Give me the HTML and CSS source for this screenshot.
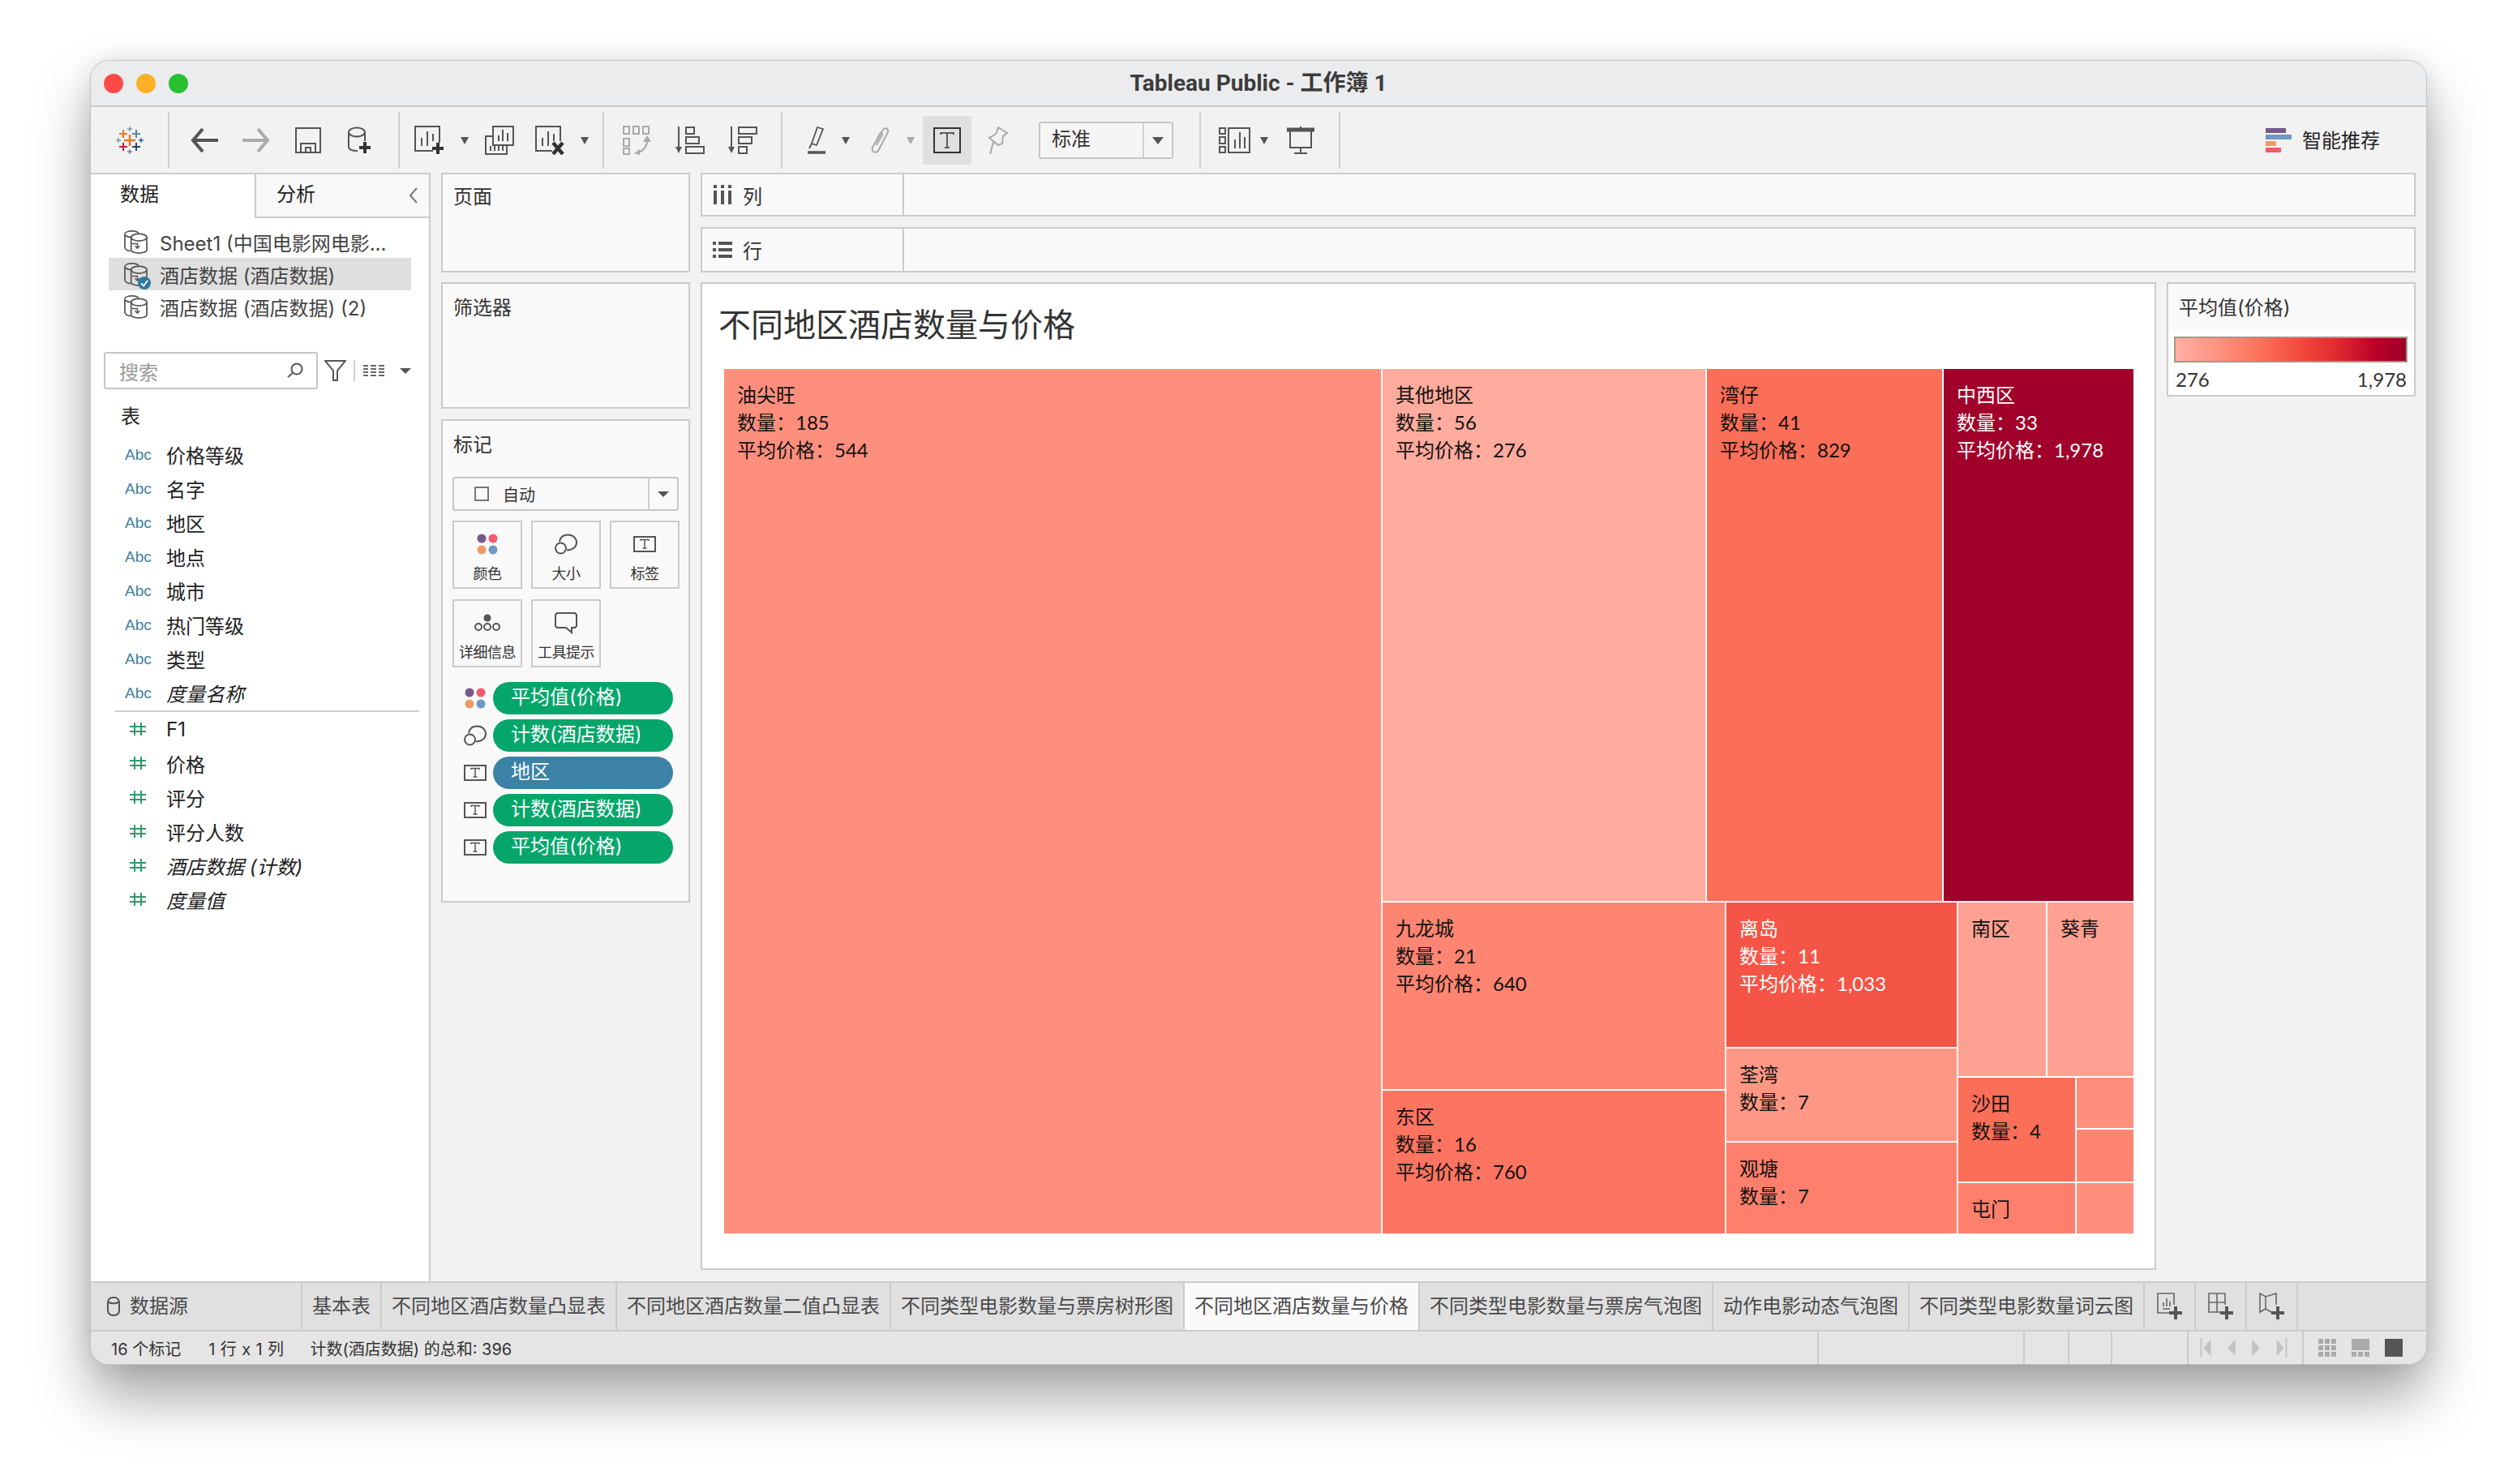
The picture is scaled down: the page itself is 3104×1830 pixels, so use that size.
FILE: index.html
```html
<!DOCTYPE html>
<html>
<head>
    <title>Tableau Public - 工作簿 1</title>
    <link rel="stylesheet" href="styles.css">
</head>
<body>
<svg class="defs" width="0" height="0">
    <symbol id="i-db" viewBox="0 0 32 30">
        <g fill="none" stroke="#555" stroke-width="1.8">
            <path d="M2 5V22C2 24 5 26 9 26.500"/>
            <path d="M2 5C2 2.500 6 1 11 1C15 1 19 2 20 5"/>
            <path d="M2 6C4 8 8 9 11 8.800"/>
            <ellipse cx="20" cy="9" rx="10" ry="4.500"/>
            <path d="M10 9V25C10 27.500 15 29 20 29S30 27.500 30 25V9"/>
            <path d="M11 17H18V22M15 20L18 23L21 20" stroke-width="1.500"/>
        </g>
    </symbol>
    <symbol id="i-dots" viewBox="0 0 26 26">
        <circle cx="6" cy="6" r="5.500" fill="#76588a"/>
        <circle cx="20" cy="6" r="5.500" fill="#f55a6e"/>
        <circle cx="6" cy="20" r="5.500" fill="#ee9a67"/>
        <circle cx="20" cy="20" r="5.500" fill="#7098c4"/>
    </symbol>
    <symbol id="i-size" viewBox="0 0 28 26">
        <path d="M6 10C7 4 11 1.500 16.500 1.500C23 1.500 27 6 27 11C27 16 23 20 15 20.500" fill="none" stroke="#555" stroke-width="2"/>
        <circle cx="7.500" cy="18" r="6.500" fill="none" stroke="#555" stroke-width="2"/>
    </symbol>
    <symbol id="i-t" viewBox="0 0 28 20">
        <rect x="1" y="1" width="26" height="18" fill="none" stroke="#555" stroke-width="2"/>
        <path d="M9 6V4.500H19V6M14 4.500V15M11.500 15H16.500" fill="none" stroke="#555" stroke-width="1.500"/>
    </symbol>
    <symbol id="i-hash" viewBox="0 0 20 16">
        <path d="M6 0V16M14 0V16M0 5H20M0 11H20" fill="none" stroke="#2d9a6b" stroke-width="2"/>
    </symbol>
</svg>

<div class="window">
    <div class="titlebar">
        <div class="lights">
            <span class="light red"></span>
            <span class="light yellow"></span>
            <span class="light green"></span>
        </div>
        <div class="title">Tableau Public - 工作簿 1</div>
    </div>

    <div class="toolbar">
        <div class="tb-group logo-group">
            <svg width="34" height="34" viewBox="0 0 34 34" fill="none" stroke-width="2">
                <path d="M17 10V24M10 17H24" stroke="#e8762b" stroke-width="2.500"/>
                <path d="M9 4V14M4 9H14" stroke="#e8762b"/>
                <path d="M25 4V14M20 9H30" stroke="#5b879b"/>
                <path d="M9 20V30M4 25H14" stroke="#c72035"/>
                <path d="M25 20V30M20 25H30" stroke="#1f447e"/>
                <path d="M17 0V6M14 3H20" stroke="#7199a6" stroke-width="1.500"/>
                <path d="M3 14V20M0 17H6" stroke="#6f9fb0" stroke-width="1.500"/>
                <path d="M31 14V20M28 17H34" stroke="#3d6a8c" stroke-width="1.500"/>
                <path d="M17 28V34M14 31H20" stroke="#7b7aa0" stroke-width="1.500"/>
            </svg>
        </div>
        <div class="tb-group pad-11">
            <div class="tb w64">
                <svg width="36" height="32" viewBox="0 0 36 32" fill="none" stroke="#555" stroke-width="4">
                    <path d="M35 16H5M16 2L4 16L16 30"/>
                </svg>
            </div>
            <div class="tb w64">
                <svg width="36" height="32" viewBox="0 0 36 32" fill="none" stroke="#aaa" stroke-width="4">
                    <path d="M1 16H31M20 2L32 16L20 30"/>
                </svg>
            </div>
            <div class="tb w64">
                <svg width="32" height="32" viewBox="0 0 32 32" fill="none" stroke="#555" stroke-width="2">
                    <path d="M1 1H31V31H1Z"/>
                    <path d="M7 31V20H25V31M13 31V25H19V31" />
                </svg>
            </div>
            <div class="tb w64">
                <svg width="30" height="34" viewBox="0 0 30 34" fill="none">
                    <ellipse cx="11" cy="7" rx="10" ry="5.500" stroke="#555" stroke-width="2"/>
                    <path d="M1 7V25C1 28 5 30 12 30M21 7V18" stroke="#555" stroke-width="2"/>
                    <path d="M21 19V33M14 26H28" stroke="#333" stroke-width="4"/>
                </svg>
            </div>
        </div>
        <div class="tb-group pad-6">
            <div class="tb w62">
                <svg width="38" height="36" viewBox="0 0 38 36" fill="none">
                    <path d="M23 31H1V1H31V21" stroke="#555" stroke-width="2"/>
                    <path d="M9 25V15M16 25V7M23 19V10" stroke="#555" stroke-width="2"/>
                    <path d="M29 21V35M22 28H36" stroke="#333" stroke-width="4"/>
                </svg>
            </div>
            <div class="tb w24"><span class="caret"></span></div>
            <div class="tb w62">
                <svg width="36" height="36" viewBox="0 0 36 36" fill="none" stroke="#555" stroke-width="2">
                    <path d="M10 1H35V24H10Z"/>
                    <path d="M10 13H1V35H27V24"/>
                    <path d="M17 19V12M22 19V5M28 19V9"/>
                    <path d="M7 31V25M12 31V25M17 31V25M22 31V25"/>
                </svg>
            </div>
            <div class="tb w62">
                <svg width="36" height="36" viewBox="0 0 36 36" fill="none">
                    <path d="M21 31H1V1H31V19" stroke="#555" stroke-width="2"/>
                    <path d="M9 25V15M16 25V7M23 19V10" stroke="#555" stroke-width="2"/>
                    <path d="M22 21L34 35M34 21L22 35" stroke="#333" stroke-width="4.500"/>
                </svg>
            </div>
            <div class="tb w24"><span class="caret"></span></div>
        </div>
        <div class="tb-group pad-8">
            <div class="tb w65">
                <svg width="36" height="36" viewBox="0 0 36 36" fill="none" stroke="#aaa" stroke-width="2">
                    <path d="M1 1H8V10H1ZM13 1H20V10H13ZM25 1H32V10H25ZM1 16H8V25H1ZM1 28H8V35H1Z"/>
                    <path d="M30 15C31 24 26 31 17 34" stroke-width="2.500"/>
                    <path d="M25 20L30 12L35 20ZM21 29L14 34L21 36Z" fill="#aaa" stroke="none"/>
                </svg>
            </div>
            <div class="tb w65">
                <svg width="36" height="34" viewBox="0 0 36 34" fill="none" stroke="#555" stroke-width="2">
                    <path d="M4 0V28"/>
                    <path d="M0 25L4 33L8 25Z" fill="#555" stroke="none"/>
                    <path d="M13 1H23V9H13ZM13 13H29V21H13ZM13 25H35V33H13Z"/>
                </svg>
            </div>
            <div class="tb w65">
                <svg width="36" height="34" viewBox="0 0 36 34" fill="none" stroke="#555" stroke-width="2">
                    <path d="M4 0V28"/>
                    <path d="M0 25L4 33L8 25Z" fill="#555" stroke="none"/>
                    <path d="M13 1H35V9H13ZM13 13H29V21H13ZM13 25H23V33H13Z"/>
                </svg>
            </div>
        </div>
        <div class="tb-group pad-18">
            <div class="tb w48">
                <svg width="24" height="34" viewBox="0 0 24 34" fill="none" stroke="#555" stroke-width="1.800">
                    <path d="M13 1L20 3L12 23L6 21Z"/>
                    <path d="M6 21L3 27"/>
                    <path d="M1 32H23" stroke-width="3.500"/>
                </svg>
            </div>
            <div class="tb w24"><span class="caret"></span></div>
            <div class="tb w60">
                <svg width="26" height="36" viewBox="0 0 26 36" fill="none" stroke="#aaa" stroke-width="2">
                    <path d="M7 22L17 5C19 2 24 3 23 8L12 29C9 35 2 33 4 27L13 10C14 8 17 9 16 11L9 24"/>
                </svg>
            </div>
            <div class="tb w16"><span class="caret soft"></span></div>
            <div class="tb t-active">
                <svg width="34" height="32" viewBox="0 0 34 32" fill="none" stroke="#333">
                    <rect x="1" y="1" width="32" height="30" stroke-width="2"/>
                    <path d="M9 9V7H25V9M17 7V25M14 25H20" stroke-width="1.500"/>
                </svg>
            </div>
            <div class="tb w66">
                <svg width="26" height="36" viewBox="0 0 26 36" fill="none" stroke="#aaa" stroke-width="2">
                    <path d="M13 2L24 9L19 13L18 22L13 24L2 15L7 12L11 9Z"/>
                    <path d="M7 20L3 35"/>
                </svg>
            </div>
            <div class="std-select">
                <span class="std-text">标准</span>
                <span class="std-arrow"><span class="caret big"></span></span>
            </div>
        </div>
        <div class="tb-group pad-12">
            <div class="tb w60">
                <svg width="40" height="32" viewBox="0 0 40 32" fill="none" stroke="#555" stroke-width="2">
                    <path d="M1 1H8V8H1ZM1 12H8V20H1ZM1 24H8V31H1ZM12 1H38V31H12Z"/>
                    <path d="M20 26V15M26 26V6M32 26V12"/>
                </svg>
            </div>
            <div class="tb w12"><span class="caret"></span></div>
            <div class="tb w78">
                <svg width="34" height="34" viewBox="0 0 34 34" fill="none" stroke="#555" stroke-width="2">
                    <path d="M0 4H34" stroke-width="5"/>
                    <path d="M4 5V26H30V5M17 0V3M17 26V33M9 33H25"/>
                </svg>
            </div>
        </div>
        <div class="recommend">
            <div class="rec-bars">
                <span class="rec-bar b1"></span>
                <span class="rec-bar b2"></span>
                <span class="rec-bar b3"></span>
                <span class="rec-bar b4"></span>
            </div>
            <span class="rec-text">智能推荐</span>
        </div>
    </div>

    <div class="main">
        <div class="data-panel">
            <div class="panel-tabs">
                <div class="panel-tab active">数据</div>
                <div class="panel-tab">
                    <span class="panel-tab-name">分析</span>
                    <svg class="collapse" width="12" height="20" viewBox="0 0 12 20" fill="none" stroke="#777" stroke-width="2"><path d="M10 1L2 10L10 19"/></svg>
                </div>
            </div>
            <div class="sources">
                <div class="source"><span class="src-icon"><svg width="31" height="29"><use href="#i-db"/></svg></span><span>Sheet1 (中国电影网电影...</span></div>
                <div class="source selected">
                    <span class="src-icon">
                        <svg width="31" height="29"><use href="#i-db"/></svg>
                        <svg class="src-check" width="16" height="16" viewBox="0 0 18 18"><circle cx="9" cy="9" r="9" fill="#2e7a9f"/><path d="M4.500 9.500L8 13L13.500 5.500" fill="none" stroke="#fff" stroke-width="2"/></svg>
                    </span>
                    <span>酒店数据 (酒店数据)</span>
                </div>
                <div class="source"><span class="src-icon"><svg width="31" height="29"><use href="#i-db"/></svg></span><span>酒店数据 (酒店数据) (2)</span></div>
            </div>
            <div class="search-row">
                <div class="search">
                    <span>搜索</span>
                    <svg width="20" height="20" viewBox="0 0 20 20" fill="none" stroke="#555" stroke-width="2"><circle cx="12" cy="8" r="6.500"/><path d="M7 13L1 18"/></svg>
                </div>
                <svg class="funnel" width="27" height="26" viewBox="0 0 27 26" fill="none" stroke="#555" stroke-width="2"><path d="M1 1H26L16 13V25H11V13Z"/></svg>
                <span class="search-sep"></span>
                <svg class="list-view" width="26" height="16" viewBox="0 0 26 16" fill="none" stroke="#666" stroke-width="2"><path d="M0 2H6M9 2H16M19 2H26M0 6H6M9 6H16M19 6H26M0 10H6M9 10H16M19 10H26M0 14H6M9 14H16M19 14H26"/></svg>
                <span class="caret wide"></span>
            </div>
            <div class="field-head">表</div>
            <div class="fields dims">
                <div class="field"><span class="abc">Abc</span><span>价格等级</span></div>
                <div class="field"><span class="abc">Abc</span><span>名字</span></div>
                <div class="field"><span class="abc">Abc</span><span>地区</span></div>
                <div class="field"><span class="abc">Abc</span><span>地点</span></div>
                <div class="field"><span class="abc">Abc</span><span>城市</span></div>
                <div class="field"><span class="abc">Abc</span><span>热门等级</span></div>
                <div class="field"><span class="abc">Abc</span><span>类型</span></div>
                <div class="field"><span class="abc">Abc</span><em>度量名称</em></div>
            </div>
            <div class="field-sep"></div>
            <div class="fields">
                <div class="field"><svg class="hash" width="20" height="16"><use href="#i-hash"/></svg><span>F1</span></div>
                <div class="field"><svg class="hash" width="20" height="16"><use href="#i-hash"/></svg><span>价格</span></div>
                <div class="field"><svg class="hash" width="20" height="16"><use href="#i-hash"/></svg><span>评分</span></div>
                <div class="field"><svg class="hash" width="20" height="16"><use href="#i-hash"/></svg><span>评分人数</span></div>
                <div class="field"><svg class="hash" width="20" height="16"><use href="#i-hash"/></svg><em>酒店数据 (计数)</em></div>
                <div class="field"><svg class="hash" width="20" height="16"><use href="#i-hash"/></svg><em>度量值</em></div>
            </div>
        </div>

        <div class="cards">
            <div class="card pages"><div class="card-label">页面</div></div>
            <div class="card filters"><div class="card-label">筛选器</div></div>
            <div class="card marks">
                <div class="card-label">标记</div>
                <div class="mark-select">
                    <span class="mark-check"></span>
                    <span class="mark-name">自动</span>
                    <span class="mark-arrow"><span class="caret wide"></span></span>
                </div>
                <div class="mark-btns">
                    <div class="mark-btn"><svg width="26" height="26"><use href="#i-dots"/></svg><span>颜色</span></div>
                    <div class="mark-btn"><svg width="28" height="26"><use href="#i-size"/></svg><span>大小</span></div>
                    <div class="mark-btn"><svg width="28" height="20"><use href="#i-t"/></svg><span>标签</span></div>
                    <div class="mark-btn">
                        <svg width="32" height="22" viewBox="0 0 32 22" fill="none" stroke="#555" stroke-width="2">
                            <circle cx="16" cy="5" r="4.500" fill="#555" stroke="none"/>
                            <circle cx="5" cy="16" r="4"/><circle cx="16" cy="16" r="4"/><circle cx="27" cy="16" r="4"/>
                        </svg>
                        <span>详细信息</span>
                    </div>
                    <div class="mark-btn">
                        <svg width="28" height="26" viewBox="0 0 28 26" fill="none" stroke="#555" stroke-width="2">
                            <path d="M1 3L3 1H25L27 3V17L25 19H21V25L14 19H3L1 17Z"/>
                        </svg>
                        <span>工具提示</span>
                    </div>
                </div>
                <div class="pills">
                    <div class="pill-row"><svg class="pill-icon" width="26" height="26"><use href="#i-dots"/></svg><span class="pill green">平均值(价格)</span></div>
                    <div class="pill-row"><svg class="pill-icon" width="28" height="26"><use href="#i-size"/></svg><span class="pill green">计数(酒店数据)</span></div>
                    <div class="pill-row"><svg class="pill-icon" width="28" height="20"><use href="#i-t"/></svg><span class="pill blue">地区</span></div>
                    <div class="pill-row"><svg class="pill-icon" width="28" height="20"><use href="#i-t"/></svg><span class="pill green">计数(酒店数据)</span></div>
                    <div class="pill-row"><svg class="pill-icon" width="28" height="20"><use href="#i-t"/></svg><span class="pill green">平均值(价格)</span></div>
                </div>
            </div>
        </div>

        <div class="workspace">
            <div class="shelf cols">
                <div class="shelf-label">
                    <svg width="24" height="24" viewBox="0 0 24 24" fill="#555"><path d="M1 0H5V4H1ZM10 0H14V4H10ZM19 0H23V4H19ZM1 7H5V24H1ZM10 7H14V24H10ZM19 7H23V24H19Z"/></svg>
                    <span>列</span>
                </div>
            </div>
            <div class="shelf rows">
                <div class="shelf-label">
                    <svg width="24" height="24" viewBox="0 0 24 24" fill="#555"><path d="M0 2H4V6H0ZM7 2H24V6H7ZM0 10H4V14H0ZM7 10H24V14H7ZM0 18H4V22H0ZM7 18H24V22H7Z"/></svg>
                    <span>行</span>
                </div>
            </div>
            <div class="view-row">
                <div class="viz">
                    <div class="viz-title">不同地区酒店数量与价格</div>
                    <div class="treemap">
                        <div class="cell c-ysw">油尖旺<br>数量：185<br>平均价格：544</div>
                        <div class="tm-right">
                            <div class="tm-top">
                                <div class="cell c-qt">其他地区<br>数量：56<br>平均价格：276</div>
                                <div class="cell c-wz">湾仔<br>数量：41<br>平均价格：829</div>
                                <div class="cell c-zx light-text">中西区<br>数量：33<br>平均价格：1,978</div>
                            </div>
                            <div class="tm-bottom">
                                <div class="tm-col1">
                                    <div class="cell c-jlc">九龙城<br>数量：21<br>平均价格：640</div>
                                    <div class="cell c-dq">东区<br>数量：16<br>平均价格：760</div>
                                </div>
                                <div class="tm-col2">
                                    <div class="cell c-ld light-text">离岛<br>数量：11<br>平均价格：1,033</div>
                                    <div class="cell c-qw">荃湾<br>数量：7</div>
                                    <div class="cell c-gt">观塘<br>数量：7</div>
                                </div>
                                <div class="tm-col3">
                                    <div class="tm-pair">
                                        <div class="cell c-nq">南区</div>
                                        <div class="cell c-nq">葵青</div>
                                    </div>
                                    <div class="tm-rest">
                                        <div class="tm-rest-l">
                                            <div class="cell c-wz">沙田<br>数量：4</div>
                                            <div class="cell c-gt">屯门</div>
                                        </div>
                                        <div class="tm-rest-r">
                                            <div class="cell c-s1"></div>
                                            <div class="cell c-jlc"></div>
                                            <div class="cell c-s1"></div>
                                        </div>
                                    </div>
                                </div>
                            </div>
                        </div>
                    </div>
                </div>
                <div class="legend">
                    <div class="legend-head">平均值(价格)</div>
                    <div class="legend-body">
                        <div class="legend-ramp"></div>
                        <div class="legend-range"><span>276</span><span>1,978</span></div>
                    </div>
                </div>
            </div>
        </div>
    </div>

    <div class="tabs">
        <div class="tab source-tab">
            <svg width="16" height="24" viewBox="0 0 16 24" fill="none" stroke="#555" stroke-width="2"><rect x="1" y="1" width="14" height="22" rx="6"/><path d="M1 6C4 9 12 9 15 6"/></svg>
            <span>数据源</span>
        </div>
        <div class="tab">基本表</div>
        <div class="tab">不同地区酒店数量凸显表</div>
        <div class="tab">不同地区酒店数量二值凸显表</div>
        <div class="tab">不同类型电影数量与票房树形图</div>
        <div class="tab current">不同地区酒店数量与价格</div>
        <div class="tab">不同类型电影数量与票房气泡图</div>
        <div class="tab">动作电影动态气泡图</div>
        <div class="tab">不同类型电影数量词云图</div>
        <div class="tab add">
            <svg width="32" height="34" viewBox="0 0 32 34" fill="none" stroke="#666" stroke-width="2">
                <path d="M16 25H1V1H21V15M7 20H16M8 17V12M12 17V7M16 17V11" stroke-width="1.600"/>
                <path d="M23 17V33M15 25H31" stroke="#555" stroke-width="4"/>
            </svg>
        </div>
        <div class="tab add">
            <svg width="32" height="34" viewBox="0 0 32 34" fill="none" stroke="#666" stroke-width="2">
                <path d="M15 24H1V1H21V15M11 1V24M1 12H21" stroke-width="1.600"/>
                <path d="M23 17V33M15 25H31" stroke="#555" stroke-width="4"/>
            </svg>
        </div>
        <div class="tab add">
            <svg width="32" height="34" viewBox="0 0 32 34" fill="none" stroke="#666" stroke-width="2">
                <path d="M15 24L8 20L1 24V1L8 5L21 1V15M8 5V20" stroke-width="1.600"/>
                <path d="M23 17V33M15 25H31" stroke="#555" stroke-width="4"/>
            </svg>
        </div>
    </div>

    <div class="statusbar">
        <span class="status-text first">16 个标记</span>
        <span class="status-text second">1 行 x 1 列</span>
        <span class="status-text third">计数(酒店数据) 的总和: 396</span>
        <div class="status-cells">
            <span class="status-cell s254"></span>
            <span class="status-cell s55"></span>
            <span class="status-cell s53"></span>
            <span class="status-cell s94"></span>
            <div class="status-cell pager">
                <svg width="14" height="24" viewBox="0 0 14 26" fill="#c2c2c2"><path d="M0 0H2V26H0ZM14 2V24L4 13Z"/></svg>
                <svg width="10" height="24" viewBox="0 0 10 26" fill="#c2c2c2"><path d="M10 2V24L0 13Z"/></svg>
                <svg width="10" height="24" viewBox="0 0 10 26" fill="#c2c2c2"><path d="M0 2V24L10 13Z"/></svg>
                <svg width="14" height="24" viewBox="0 0 14 26" fill="#c2c2c2"><path d="M12 0H14V26H12ZM0 2V24L10 13Z"/></svg>
            </div>
            <div class="status-cell views">
                <svg width="22" height="22" viewBox="0 0 22 22" fill="#aaa"><path d="M0 0H6V6H0ZM8 0H14V6H8ZM16 0H22V6H16ZM0 8H6V14H0ZM8 8H14V14H8ZM16 8H22V14H16ZM0 16H6V22H0ZM8 16H14V22H8ZM16 16H22V22H16Z"/></svg>
                <svg width="22" height="22" viewBox="0 0 22 22" fill="#aaa"><path d="M0 0H22V14H0ZM0 16H6V22H0ZM8 16H14V22H8ZM16 16H22V22H16Z"/></svg>
                <svg width="22" height="22" viewBox="0 0 22 22" fill="#555"><path d="M0 0H22V22H0Z"/></svg>
            </div>
        </div>
    </div>
</div>
</body>
</html>
```

FILE: styles.css
```css
* {
    box-sizing: border-box;
}

html, body {
    margin: 0;
    padding: 0;
}

body {
    width: 3104px;
    height: 1830px;
    padding: 75px 112px 0;
    overflow: hidden;
    background: #fff;
    font-family: Inter, "Noto Sans CJK SC", sans-serif;
    font-size: 24px;
    color: #333;
}

.defs {
    position: absolute;
}

.window {
    width: 2880px;
    height: 1607px;
    border-radius: 22px;
    overflow: hidden;
    background: #f2f2f2;
    display: flex;
    flex-direction: column;
    box-shadow: 0 0 0 1px #c4c4c4, 0 40px 70px rgba(0, 0, 0, 0.36), 0 0 30px rgba(0, 0, 0, 0.1);
}

/* title bar */
.titlebar {
    height: 57px;
    flex: none;
    position: relative;
    background: #ebecee;
    border-bottom: 2px solid #cbcbcb;
    display: flex;
    align-items: center;
    justify-content: center;
}

.lights {
    position: absolute;
    left: 16px;
    top: 16px;
    display: flex;
    gap: 16px;
}

.light {
    width: 24px;
    height: 24px;
    border-radius: 50%;
}

.red { background: #fd4a48; }
.yellow { background: #fdb024; }
.green { background: #27c132; }

.title {
    font-family: Roboto, "Noto Sans CJK SC", sans-serif;
    font-size: 28px;
    font-weight: 700;
    line-height: 52px;
    color: #3c3c3c;
}

/* toolbar */
.toolbar {
    height: 81px;
    flex: none;
    display: flex;
    padding-top: 6px;
    padding-bottom: 5px;
    background: #f2f2f2;
}

.tb-group {
    display: flex;
    align-items: center;
    border-right: 2px solid #cfcfcf;
}

.logo-group { width: 97px; justify-content: center; }
.pad-6 { width: 252px; padding-left: 6px; }
.pad-8 { width: 220px; padding-left: 8px; }
.pad-11 { width: 284px; padding-left: 11px; }
.pad-12 { width: 172px; padding-left: 12px; }
.pad-18 { width: 516px; padding-left: 18px; }

.tb {
    height: 60px;
    display: flex;
    align-items: center;
    justify-content: center;
    flex: none;
}

.w12 { width: 12px; }
.w16 { width: 16px; }
.w24 { width: 24px; }
.w48 { width: 48px; }
.w60 { width: 60px; }
.w62 { width: 62px; }
.w64 { width: 64px; }
.w65 { width: 65px; }
.w66 { width: 66px; }
.w78 { width: 78px; }

.t-active {
    width: 60px;
    margin-left: 7px;
    background: #e0e0e0;
}

.caret {
    width: 0;
    height: 0;
    border-left: 5.5px solid transparent;
    border-right: 5.5px solid transparent;
    border-top: 9px solid #555;
}

.caret.soft { border-top-color: #aaa; }

.caret.big,
.caret.wide {
    border-left-width: 7px;
    border-right-width: 7px;
}

.caret.wide { border-top-width: 7px; }

.std-select {
    width: 166px;
    height: 46px;
    margin-left: 17px;
    display: flex;
    border: 2px solid #c6c6c6;
    border-radius: 3px;
    background: #f5f5f5;
}

.std-text {
    flex: 1;
    padding-left: 14px;
    line-height: 40px;
}

.std-arrow {
    width: 36px;
    border-left: 2px solid #d0d0d0;
    display: flex;
    align-items: center;
    justify-content: center;
}

.recommend {
    margin-left: auto;
    padding-right: 57px;
    display: flex;
    align-items: center;
    gap: 13px;
    color: #222;
}

.rec-text {
    margin-top: -4px;
}

.rec-bars {
    width: 32px;
    display: flex;
    flex-direction: column;
    gap: 2px;
}

.rec-bar {
    display: block;
    height: 6px;
}

.b1 { width: 25px; background: #76588a; }
.b2 { width: 32px; background: #7098c4; }
.b3 { width: 13px; background: #ee9a67; }
.b4 { width: 19px; background: #f55a6e; }

/* main area */
.main {
    height: 1367px;
    flex: none;
    display: flex;
    background: #f2f2f2;
}

.data-panel {
    width: 419px;
    flex: none;
    background: #fff;
    border-top: 2px solid #cbcbcb;
    border-right: 2px solid #cbcbcb;
}

.panel-tabs {
    height: 54px;
    display: flex;
}

.panel-tab {
    line-height: 50px;
    color: #222;
}

.panel-tab.active {
    width: 202px;
    padding-left: 36px;
}

.panel-tab:not(.active) {
    flex: 1;
    display: flex;
    justify-content: space-between;
    align-items: center;
    padding: 0 13px 0 25px;
    background: #f8f8f8;
    border-left: 2px solid #cbcbcb;
    border-bottom: 2px solid #cbcbcb;
}

.panel-tab-name {
    margin-top: -2px;
}

.sources {
    margin-top: 9px;
}

.source {
    height: 40px;
    display: flex;
    align-items: center;
    gap: 14px;
    margin: 0 22px;
    padding-left: 18px;
    color: #444;
    white-space: nowrap;
}

.source.selected {
    background: #dfdfdf;
}

.src-icon {
    position: relative;
    display: block;
    width: 31px;
    height: 29px;
    flex: none;
}

.src-check {
    position: absolute;
    left: 18px;
    top: 17px;
}

.search-row {
    display: flex;
    align-items: center;
    margin-top: 36px;
    padding-left: 16px;
}

.search {
    width: 264px;
    height: 46px;
    display: flex;
    align-items: center;
    justify-content: space-between;
    padding: 0 16px 0 17px;
    border: 2px solid #c6c6c6;
    border-radius: 3px;
    color: #9a9a9a;
}

.funnel {
    margin-left: 8px;
}

.search-sep {
    width: 2px;
    height: 26px;
    margin-left: 9px;
    background: #cfcfcf;
}

.list-view {
    margin-left: 10px;
}

.search-row .caret {
    margin-left: 19px;
}

.field-head {
    height: 42px;
    line-height: 42px;
    margin-top: 13px;
    padding-left: 37px;
    color: #222;
}

.fields {
    padding-left: 42px;
}

.fields.dims {
    margin-top: 4px;
}

.field {
    height: 42px;
    display: flex;
    align-items: center;
    color: #222;
}

.field em {
    font-style: italic;
    white-space: nowrap;
}

.abc {
    width: 51px;
    padding-top: 2px;
    font-family: "Liberation Sans", sans-serif;
    font-size: 19px;
    color: #3d7fa0;
}

.hash {
    margin: 0 25px 0 6px;
}

.field-sep {
    height: 2px;
    margin: 1px 12px 0 30px;
    background: #cfcfcf;
}

/* pages, filters, marks */
.cards {
    width: 307px;
    flex: none;
    margin-left: 13px;
    display: flex;
    flex-direction: column;
}

.card {
    background: #f9f9f9;
    border: 2px solid #cbcbcb;
    padding: 0 12px;
}

.card-label {
    height: 56px;
    padding-left: 1px;
    line-height: 56px;
    color: #333;
}

.filters .card-label,
.marks .card-label {
    line-height: 59px;
}

.pages { height: 123px; }
.filters { height: 156px; margin-top: 12px; }
.marks { height: 596px; margin-top: 13px; }

.mark-select {
    height: 42px;
    margin-top: 13px;
    display: flex;
    align-items: center;
    border: 2px solid #c6c6c6;
    border-radius: 3px;
    font-size: 20px;
}

.mark-check {
    width: 18px;
    height: 18px;
    margin-left: 25px;
    border: 2px solid #777;
}

.mark-name {
    flex: 1;
    margin-left: 17px;
}

.mark-arrow {
    width: 36px;
    height: 100%;
    display: flex;
    align-items: center;
    justify-content: center;
    border-left: 2px solid #d0d0d0;
}

.mark-btns {
    margin-top: 12px;
    display: grid;
    grid-template-columns: 86px 86px 86px;
    grid-auto-rows: 84px;
    column-gap: 11px;
    row-gap: 13px;
}

.mark-btn {
    padding-top: 12px;
    display: flex;
    flex-direction: column;
    align-items: center;
    border: 2px solid #cbcbcb;
    font-size: 18px;
    white-space: nowrap;
    color: #333;
}

.mark-btn svg {
    height: 30px;
    flex: none;
}

.mark-btn span {
    margin-top: 7px;
    letter-spacing: -0.5px;
}

.pills {
    margin-top: 18px;
    padding-left: 14px;
    display: flex;
    flex-direction: column;
    gap: 6px;
}

.pill-row {
    height: 40px;
    display: flex;
    align-items: center;
}

.pill-icon {
    width: 28px;
    flex: none;
}

.pill {
    width: 222px;
    height: 40px;
    margin-left: 8px;
    padding-left: 22px;
    border-radius: 20px;
    line-height: 38px;
    color: #fff;
    white-space: nowrap;
}

.pill.green { background: #06a66b; }
.pill.blue { background: #3b82a6; }

/* workspace */
.workspace {
    width: 2115px;
    flex: none;
    margin-left: 13px;
    display: flex;
    flex-direction: column;
}

.shelf {
    background: #f9f9f9;
    border: 2px solid #cbcbcb;
}

.cols { height: 54px; }
.rows { height: 56px; margin-top: 13px; }

.shelf-label {
    width: 249px;
    height: 100%;
    display: flex;
    align-items: center;
    gap: 13px;
    padding-left: 13px;
    border-right: 2px solid #cbcbcb;
}

.rows .shelf-label span {
    margin-top: -2px;
}

.view-row {
    margin-top: 12px;
    display: flex;
    align-items: flex-start;
    gap: 13px;
}

.viz {
    width: 1795px;
    height: 1218px;
    flex: none;
    background: #fff;
    border: 2px solid #cbcbcb;
    padding-left: 27px;
}

.viz-title {
    height: 105px;
    margin-left: -7px;
    line-height: 96px;
    font-family: "Noto Sans CJK SC", sans-serif;
    font-size: 40px;
    color: #333;
}

/* treemap */
.treemap {
    width: 1738px;
    height: 1066px;
    display: grid;
    grid-template-columns: 810px 926px;
    gap: 2px;
    font-family: Lato, "Noto Sans CJK SC", sans-serif;
    font-size: 24px;
    line-height: 34px;
    color: #111;
}

.cell {
    padding: 15px 0 0 16px;
    min-width: 0;
    white-space: nowrap;
    overflow: hidden;
}

.tm-right {
    display: grid;
    grid-template-rows: 656px 408px;
    gap: 2px;
}

.tm-top {
    display: grid;
    grid-template-columns: 398px 290px 234px;
    gap: 2px;
}

.tm-bottom {
    display: grid;
    grid-template-columns: 422px 284px 216px;
    gap: 2px;
}

.tm-col1 {
    display: grid;
    grid-template-rows: 230px 176px;
    gap: 2px;
}

.tm-col2 {
    display: grid;
    grid-template-rows: 178px 114px 112px;
    gap: 2px;
}

.tm-col3 {
    display: grid;
    grid-template-rows: 214px 192px;
    gap: 2px;
}

.tm-pair {
    display: grid;
    grid-template-columns: 108px 106px;
    gap: 2px;
}

.tm-rest {
    display: grid;
    grid-template-columns: 144px 70px;
    gap: 2px;
}

.tm-rest-l {
    display: grid;
    grid-template-rows: 128px 62px;
    gap: 2px;
}

.tm-rest-r {
    display: grid;
    grid-template-rows: 62px 64px 62px;
    gap: 2px;
}

.light-text { color: #fff; }

.c-ysw { background: #ff8f7d; }
.c-qt { background: #ffab9d; }
.c-wz { background: #fb6e57; }
.c-zx { background: #a00029; }
.c-jlc { background: #fe8572; }
.c-dq { background: #fd7460; }
.c-ld { background: #f45546; }
.c-qw { background: #ff9785; }
.c-gt { background: #fe806c; }
.c-nq { background: #ffa192; }
.c-s1 { background: #ff8f7d; }

/* legend */
.legend {
    width: 307px;
    height: 141px;
    flex: none;
    background: #fff;
    border: 2px solid #cbcbcb;
}

.legend-head {
    height: 58px;
    padding-left: 13px;
    line-height: 60px;
    background: #f9f9f9;
    color: #333;
}

.legend-body {
    padding: 7px 8px 0 7px;
}

.legend-ramp {
    height: 32px;
    border: 2px solid #a09a85;
    background: linear-gradient(to right, #ffb0a4 0%, #ff8f7d 20%, #fb6e57 38%, #f0483b 55%, #e02a30 70%, #b80028 88%, #9e0029 100%);
}

.legend-range {
    margin-top: 6px;
    display: flex;
    justify-content: space-between;
    padding: 0 1px 0 2px;
    font-family: Lato, sans-serif;
    line-height: 30px;
    color: #333;
}

/* sheet tabs */
.tabs {
    height: 62px;
    flex: none;
    display: flex;
    background: #e0e0e0;
    border-top: 2px solid #cbcbcb;
    border-bottom: 2px solid #cbcbcb;
}

.tab {
    padding: 0 12px;
    border-right: 2px solid #cbcbcb;
    line-height: 58px;
    color: #4a4a4a;
    white-space: nowrap;
}

.source-tab {
    width: 261px;
    display: flex;
    align-items: center;
    gap: 14px;
    padding-left: 20px;
}

.source-tab span {
    margin-left: -2px;
}

.tab.current {
    background: #fafafa;
}

.tab.add {
    width: 63px;
    padding: 0;
    display: flex;
    align-items: center;
    justify-content: center;
}

/* status bar */
.statusbar {
    height: 40px;
    flex: none;
    display: flex;
    align-items: center;
    position: relative;
    background: #e5e5e5;
    font-size: 20px;
    color: #333;
}

.status-text.first { margin-left: 25px; }
.status-text.second { margin-left: 34px; letter-spacing: 0.4px; }
.status-text.third { margin-left: 32px; }

.status-cells {
    margin-left: auto;
    height: 100%;
    display: flex;
}

.status-cell {
    height: 100%;
    border-left: 2px solid #cbcbcb;
}

.s254 { width: 254px; }
.s55 { width: 55px; }
.s53 { width: 53px; }
.s94 { width: 94px; }

.pager {
    width: 142px;
    display: flex;
    align-items: center;
    gap: 20px;
    padding-left: 14px;
}

.views {
    width: 153px;
    display: flex;
    align-items: center;
    gap: 19px;
    padding-left: 18px;
}
```
